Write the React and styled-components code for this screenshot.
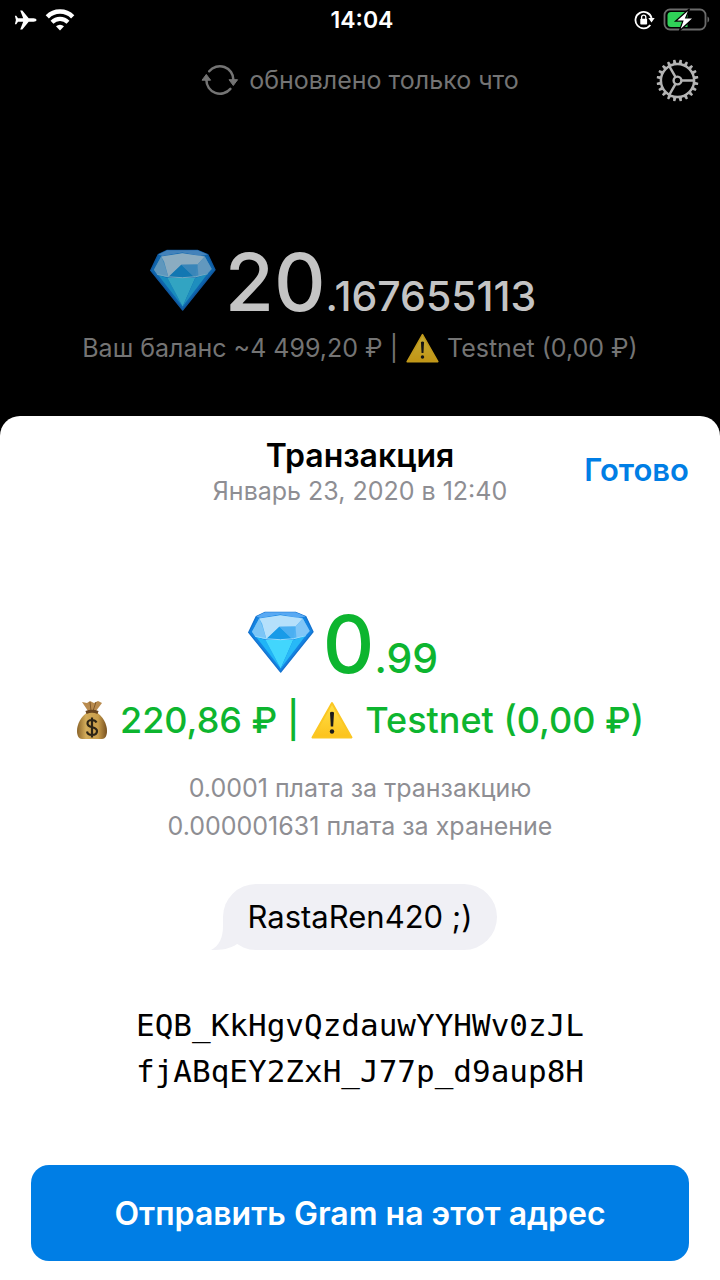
import styled, { createGlobalStyle } from 'styled-components';

const GlobalStyle = createGlobalStyle`
  * {
    box-sizing: border-box;
  }

  body {
    margin: 0;
    background-color: #000;
    font-family: Inter, 'Liberation Sans', sans-serif;
  }

  button {
    border: none;
    padding: 0;
    font-family: inherit;
    background-color: transparent;
    cursor: pointer;
  }
`;

const Screen = styled.div`
  display: flex;
  flex-direction: column;
  min-height: 100vh;
`;

const StatusBar = styled.div`
  display: grid;
  grid-template-columns: 1fr auto 1fr;
  align-items: center;
  height: 40px;
  padding: 0 10px 0 14px;
  color: #fff;
`;

const StatusIcons = styled.div`
  display: flex;
  align-items: center;
  gap: 8px;
  justify-content: ${({ $end }) => ($end ? 'flex-end' : 'flex-start')};
`;

const Clock = styled.time`
  font-size: 23px;
  font-weight: 600;
`;

const Toolbar = styled.header`
  display: grid;
  grid-template-columns: 1fr auto 1fr;
  align-items: center;
  height: 80px;
  padding: 0 21px;
`;

const UpdateStatus = styled.div`
  display: flex;
  grid-column: 2;
  align-items: center;
  gap: 10px;
  font-size: 25px;
  line-height: 32px;
  color: #747474;
`;

const SettingsButton = styled.button`
  display: flex;
  justify-self: end;
`;

const Wallet = styled.section`
  display: flex;
  flex-direction: column;
  align-items: center;
  padding: 114px 20px 50px;
`;

const Amount = styled.div`
  display: flex;
  align-items: baseline;
  height: 96px;
  padding-right: 34px;
  font-size: 80px;
  font-weight: 500;
  line-height: 96px;
  color: ${({ $color }) => $color};

  svg {
    margin-right: 9px;
  }

  small {
    font-size: 41px;
  }
`;

const Dimmed = styled.span`
  display: inline-flex;
  opacity: 0.77;
`;

const WalletNote = styled.div`
  display: flex;
  align-items: center;
  gap: 8px;
  font-size: 25px;
  line-height: 36px;
  color: #747474;
`;

const Sheet = styled.main`
  display: flex;
  flex: 1;
  flex-direction: column;
  align-items: center;
  padding: 21px 31px 20px;
  border-radius: 20px 20px 0 0;
  background-color: #fff;
`;

const SheetHeader = styled.div`
  display: grid;
  grid-template-columns: 1fr auto 1fr;
  align-items: start;
  width: 100%;
  margin-bottom: 89px;
`;

const SheetTitle = styled.div`
  grid-column: 2;
  text-align: center;

  h1 {
    margin: 0;
    font-size: 32px;
    font-weight: 600;
    line-height: 38px;
  }

  time {
    display: block;
    font-size: 25px;
    line-height: 32px;
    color: #8e8e93;
  }
`;

const DoneButton = styled.button`
  justify-self: end;
  font-size: 31px;
  font-weight: 600;
  line-height: 66px;
  color: #007ee5;
`;

const FiatRow = styled.div`
  display: flex;
  align-items: center;
  gap: 12px;
  margin: 7px 0 28px;
  font-size: 36px;
  font-weight: 500;
  line-height: 42px;
  color: #0db52f;
`;

const Fees = styled.div`
  margin-bottom: 39px;
  font-size: 25px;
  line-height: 38px;
  text-align: center;
  color: #8e8e93;
`;

const Bubble = styled.div`
  position: relative;
  margin-bottom: 52px;
  padding: 0 24px;
  border-radius: 33px;
  background-color: #f0f0f5;
  font-size: 31px;
  line-height: 66px;

  svg {
    position: absolute;
    bottom: 0;
    left: -12px;
  }
`;

const Address = styled.div`
  margin-bottom: 71px;
  font-family: 'DejaVu Sans Mono', monospace;
  font-size: 31px;
  line-height: 46px;
`;

const SendButton = styled.button`
  width: 100%;
  height: 96px;
  border-radius: 18px;
  background-color: #007ee5;
  font-size: 32px;
  font-weight: 600;
  color: #fff;
`;

function AirplaneIcon() {
  return (
    <svg width='23' height='20' viewBox='0 0 23 20' fill='#fff'>
      <path d='M22.500 10c0-1-1.300-1.700-3-1.700h-4.800L8.300.5H6.200l3 7.800H4L2.300 5.800H.9L1.900 10 .9 14.200h1.400L4 11.700h5.200l-3 7.800h2.100l6.400-7.800h4.800c1.700 0 3-.7 3-1.700z' />
    </svg>
  );
}

function WifiIcon() {
  return (
    <svg width='30' height='22' viewBox='0 0 30 22' fill='none' stroke='#fff'>
      <path d='M2.300 7.800a18 18 0 0 1 25.400 0' strokeWidth='4.600' />
      <path d='M7 13.200a11.500 11.500 0 0 1 16 0' strokeWidth='4.200' />
      <path d='M15 21.500l-4-4.300a6 6 0 0 1 8 0z' fill='#fff' stroke='none' />
    </svg>
  );
}

function RotationLockIcon() {
  return (
    <svg width='21' height='20' viewBox='0 0 21 20' fill='none'>
      <path
        d='M16.300 15A8.200 8.200 0 1 1 17.600 8'
        stroke='#fff'
        strokeWidth='1.800'
      />
      <path d='M14.300 8h6.400l-3.200 4.500z' fill='#fff' />
      <rect x='6.300' y='8.800' width='6.800' height='5.700' rx='.8' fill='#fff' />
      <path
        d='M7.600 9V7.300a2.100 2.100 0 0 1 4.200 0V9'
        stroke='#fff'
        strokeWidth='1.300'
      />
    </svg>
  );
}

function BatteryIcon() {
  return (
    <svg width='47' height='24' viewBox='0 0 47 24'>
      <rect
        x='1.500'
        y='1.500'
        width='41'
        height='20'
        rx='5.500'
        fill='none'
        stroke='#6b6b6b'
        strokeWidth='1.800'
      />
      <path d='M44.500 8.500c2.200 1 2.200 5 0 6z' fill='#6b6b6b' />
      <path
        d='M8 4h16.500v15H8a3.500 3.500 0 0 1-3.500-3.500v-8A3.500 3.500 0 0 1 8 4z'
        fill='#30d158'
      />
      <path
        d='M26.500.8L12.500 13.200h7.300L16.300 23 30.500 10h-7.800z'
        fill='#fff'
        stroke='#000'
        strokeWidth='1.200'
      />
    </svg>
  );
}

function RefreshIcon() {
  return (
    <svg width='38' height='32' viewBox='0 0 38 32' fill='none'>
      <g stroke='#747474' strokeWidth='2.500' strokeLinecap='round'>
        <path d='M8.200 7.300A13.600 13.600 0 0 1 32.400 16' />
        <path d='M29.400 24.900A13.600 13.600 0 0 1 5.400 16' />
      </g>
      <path
        d='M28 15.700h8.600l-4.300 5.800zM1 16.200h8.600l-4.300-5.800z'
        fill='#747474'
        stroke='#747474'
        strokeLinejoin='round'
      />
    </svg>
  );
}

function GearIcon() {
  const teeth = Array.from({ length: 20 }, (_, i) => (
    <path
      key={i}
      d='M19.300 4.800l.6-4.200h2.200l.6 4.200z'
      transform={`rotate(${i * 18 + 9} 21 21)`}
      fill='#b4b4b4'
    />
  ));

  return (
    <svg width='43' height='43' viewBox='0 0 42 42' fill='none'>
      {teeth}
      <g stroke='#b4b4b4' strokeWidth='2.400'>
        <circle cx='21' cy='21' r='16.200' />
        <circle cx='21' cy='21' r='3.800' />
        <path d='M24.800 21h12.600M19.100 17.700L12.800 6.800M19.100 24.300l-6.300 10.900' />
      </g>
    </svg>
  );
}

function Gem() {
  return (
    <svg width='66' height='62' viewBox='0 0 200 186'>
      <path
        d='M2 64L25 16 52 3h92l31 13 22 46-98 122z'
        fill='#1384e2'
        stroke='#1573cf'
        strokeWidth='4'
        strokeLinejoin='round'
      />
      <path d='M25 16L52 3h92l31 13-23 4-54-10-60 10z' fill='#58a9f3' />
      <path d='M12 62L34 22l64-10 68 10 21 38-12 14-40 12H56L22 76z' fill='#52b3f4' />
      <path d='M34 22l64-10 68 10-22 24-49 1-39 38-13-47z' fill='#b5e0fb' />
      <path d='M166 22l-22 24 3 36 28-10 12-12z' fill='#80c6f7' />
      <path d='M34 22L12 62l10 14 34 9-12-38z' fill='#7cc5f6' />
      <path d='M95 47l-42 39h84z' fill='#189be8' />
      <path d='M95 47l49-1-8 40z' fill='#4baff1' />
      <path d='M24 77l29 10 46 86z' fill='#20b5f6' />
      <path d='M53 87h84L99 173z' fill='#42d6fd' />
      <path d='M137 87l38-14-76 100z' fill='#27b9f7' />
      <path d='M22 76q34 10 76 10t77-12' fill='none' stroke='#95dcfd' strokeWidth='3' />
    </svg>
  );
}

function Warning({ width = 42 }) {
  return (
    <svg width={width} viewBox='0 0 42 38'>
      <defs>
        <linearGradient id='warning' x1='0' y1='0' x2='0' y2='1'>
          <stop offset='0' stopColor='#ffe14a' />
          <stop offset='1' stopColor='#fcc21b' />
        </linearGradient>
      </defs>
      <path
        d='M21 2L40.500 36.500h-39z'
        fill='url(#warning)'
        stroke='#fbc723'
        strokeWidth='2'
        strokeLinejoin='round'
      />
      <path d='M19 11.500q2-1.500 4 0l-.8 14h-2.400z' fill='#1b1b1b' />
      <circle cx='21' cy='30.500' r='2.200' fill='#1b1b1b' />
    </svg>
  );
}

function MoneyBag() {
  return (
    <svg width='32' height='40' viewBox='0 0 32 40'>
      <defs>
        <linearGradient id='bag' x1='0' y1='0' x2='1' y2='0'>
          <stop offset='0' stopColor='#8b6429' />
          <stop offset='.3' stopColor='#d4ad5b' />
          <stop offset='.7' stopColor='#c99d4a' />
          <stop offset='1' stopColor='#765020' />
        </linearGradient>
      </defs>
      <path
        d='M12 12C5 16 1 24 1 31c0 5 2 8 5 8h20c3 0 5-3 5-8 0-7-4-15-11-19z'
        fill='url(#bag)'
      />
      <path d='M12 11L6 2l5 1 3-2 4 2 4-2 4 2-6 8z' fill='#b98b4e' />
      <path d='M14 2l1 9M20 2l-3 9' stroke='#80592b' />
      <path d='M10 12.500q6-2.500 12 0' fill='none' stroke='#69451f' strokeWidth='3' />
      <path
        d='M20.500 22.500c-1-2-2.500-2.500-4.500-2.500-3 0-4.500 1.500-4.500 3.500 0 5 9.500 2.500 9.500 7.500 0 2.500-2 4-5 4-2.500 0-4.500-1-5-3.500M16 17.500v20'
        fill='none'
        stroke='#2d2415'
        strokeWidth='2.200'
      />
    </svg>
  );
}

function App() {
  return (
    <Screen>
      <GlobalStyle />
      <StatusBar>
        <StatusIcons>
          <AirplaneIcon />
          <WifiIcon />
        </StatusIcons>
        <Clock>14:04</Clock>
        <StatusIcons $end>
          <RotationLockIcon />
          <BatteryIcon />
        </StatusIcons>
      </StatusBar>

      <Toolbar>
        <UpdateStatus>
          <RefreshIcon />
          обновлено только что
        </UpdateStatus>
        <SettingsButton type='button' aria-label='Настройки'>
          <GearIcon />
        </SettingsButton>
      </Toolbar>

      <Wallet>
        <Amount $color='#c4c4c4'>
          <Dimmed>
            <Gem />
          </Dimmed>
          20<small>.167655113</small>
        </Amount>
        <WalletNote>
          <span>Ваш баланс ~4 499,20 ₽ |</span>
          <Dimmed>
            <Warning width={33} />
          </Dimmed>
          <span>Testnet (0,00 ₽)</span>
        </WalletNote>
      </Wallet>

      <Sheet>
        <SheetHeader>
          <SheetTitle>
            <h1>Транзакция</h1>
            <time dateTime='2020-01-23T12:40'>Январь 23, 2020 в 12:40</time>
          </SheetTitle>
          <DoneButton type='button'>Готово</DoneButton>
        </SheetHeader>

        <Amount $color='#0db52f'>
          <Gem />0<small>.99</small>
        </Amount>
        <FiatRow>
          <MoneyBag />
          <span>220,86 ₽ |</span>
          <Warning />
          <span>Testnet (0,00 ₽)</span>
        </FiatRow>

        <Fees>
          <div>0.0001 плата за транзакцию</div>
          <div>0.000001631 плата за хранение</div>
        </Fees>

        <Bubble>
          <svg width='40' height='34' viewBox='0 0 40 34' fill='#f0f0f5'>
            <path d='M12 0v10c0 12-4 20-12 24 11 0 19-1 26-6L36 8z' />
          </svg>
          RastaRen420 ;)
        </Bubble>

        <Address>
          <div>EQB_KkHgvQzdauwYYHWv0zJL</div>
          <div>fjABqEY2ZxH_J77p_d9aup8H</div>
        </Address>

        <SendButton type='button'>Отправить Gram на этот адрес</SendButton>
      </Sheet>
    </Screen>
  );
}

export default App;
